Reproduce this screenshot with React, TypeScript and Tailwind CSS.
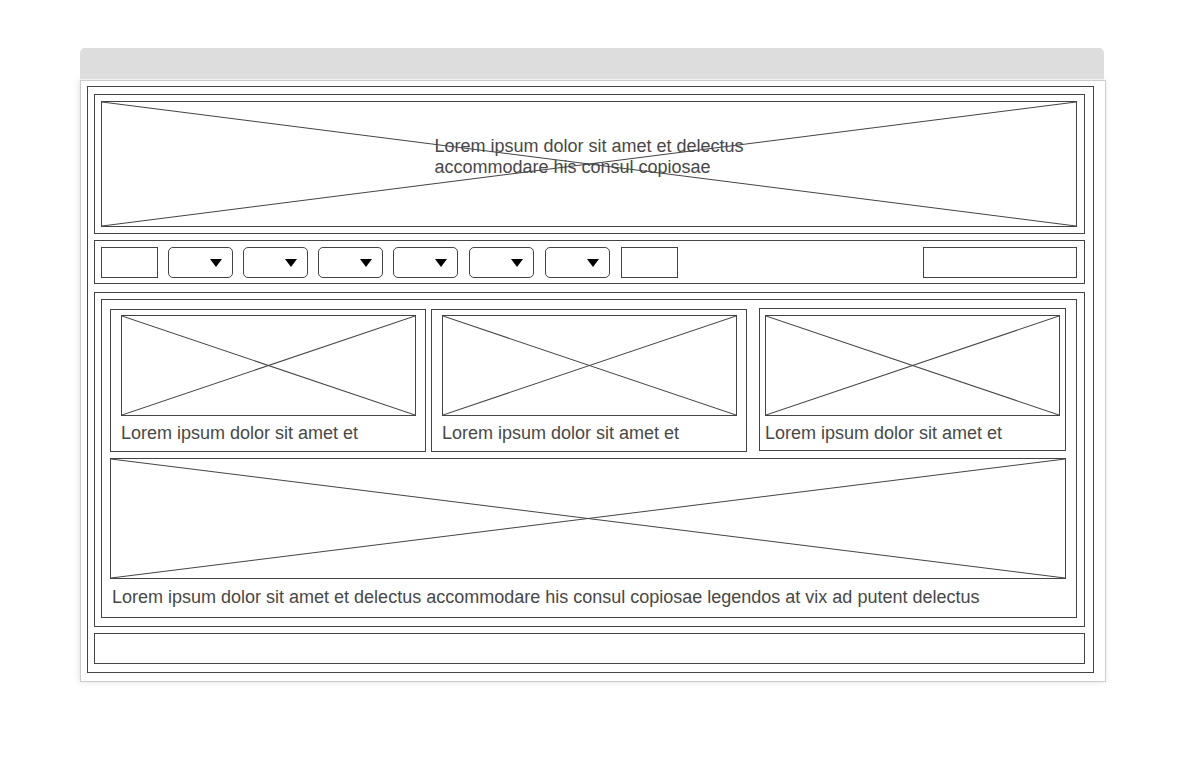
import type { ReactNode } from "react";

function Cross() {
  return (
    <svg
      className="absolute inset-0 h-full w-full"
      viewBox="0 0 100 100"
      preserveAspectRatio="none"
      fill="none"
      stroke="#444444"
      strokeWidth="1"
      aria-hidden="true"
    >
      <path d="M0 0L100 100" vectorEffect="non-scaling-stroke" />
      <path d="M0 100L100 0" vectorEffect="non-scaling-stroke" />
    </svg>
  );
}

function Placeholder({ className, children }: { className: string; children?: ReactNode }) {
  return (
    <div className={`relative border border-[#444444] ${className}`}>
      <Cross />
      {children}
    </div>
  );
}

function Dropdown({ label }: { label: string }) {
  return (
    <div className="relative">
      <select
        aria-label={label}
        className="block h-[31px] w-[65px] appearance-none rounded-[5px] border border-[#444444] bg-white"
      >
        <option value=""></option>
      </select>
      <svg
        className="pointer-events-none absolute top-3 right-[11px]"
        width="12"
        height="8"
        viewBox="0 0 12 8"
        aria-hidden="true"
      >
        <path d="M0 0H12L6 8Z" fill="#000000" />
      </svg>
    </div>
  );
}

function Card({ className }: { className: string }) {
  return (
    <article className={`border border-[#444444] ${className}`}>
      <Placeholder className="h-[101px]" />
      <p className="mt-[7px] whitespace-nowrap">Lorem ipsum dolor sit amet et</p>
    </article>
  );
}

export default function App() {
  return (
    <div className="min-h-screen bg-white pt-12 pr-[78px] pb-12 pl-20 font-['Liberation_Sans',Arial,sans-serif] text-[18px] leading-[21px] text-[#484848]">
      <div className="relative mr-0.5 h-[31px] rounded-t-[5px] bg-[#dddddd]" />
      <main className="mt-px border border-[#cccccc] bg-white pt-[5px] pr-[11px] pb-2 pl-1.5 shadow-[-1px_0_6px_rgba(0,0,0,0.12)]">
        <div className="border border-[#444444] pt-[7px] pr-2 pb-2 pl-1.5">
          <header className="border border-[#444444] py-1.5 pr-[7px] pl-1.5">
            <Placeholder className="flex h-[126px] justify-center pt-[34px]">
              <p className="relative">
                Lorem ipsum dolor sit amet et delectus
                <br />
                accommodare his consul copiosae
              </p>
            </Placeholder>
          </header>

          <nav className="mt-1.5 flex items-start justify-between border border-[#444444] pt-1.5 pr-[7px] pb-[5px] pl-1.5">
            <div className="flex gap-[11px]">
              <div className="flex gap-2.5">
                <button type="button" aria-label="Home" className="h-[31px] w-[57px] border border-[#444444]" />
                <Dropdown label="Menu 1" />
                <Dropdown label="Menu 2" />
                <Dropdown label="Menu 3" />
                <Dropdown label="Menu 4" />
              </div>
              <Dropdown label="Menu 5" />
              <Dropdown label="Menu 6" />
              <button type="button" aria-label="Contact" className="h-[31px] w-[57px] border border-[#444444]" />
            </div>
            <input type="search" aria-label="Search" className="h-[31px] w-[154px] border border-[#444444] px-2" />
          </nav>

          <section className="mt-2 border border-[#444444] pt-1.5 pr-[7px] pb-2 pl-1.5">
            <div className="border border-[#444444] pt-2 pr-2.5 pb-[9px] pl-2">
              <div className="flex items-start gap-3">
                <div className="mt-px grid flex-[637] grid-cols-2 gap-[5px]">
                  <Card className="pt-[5px] pr-[9px] pb-[7px] pl-2.5" />
                  <Card className="pt-[5px] pr-[9px] pb-[7px] pl-2.5" />
                </div>
                <div className="flex-[307]">
                  <Card className="px-[5px] py-1.5" />
                </div>
              </div>
              <Placeholder className="mt-1.5 h-[121px]" />
              <p className="mt-2 pl-0.5">
                Lorem ipsum dolor sit amet et delectus accommodare his consul copiosae legendos at vix ad putent
                delectus
              </p>
            </div>
          </section>

          <footer className="mt-1.5 h-[31px] border border-[#444444]" />
        </div>
      </main>
    </div>
  );
}
